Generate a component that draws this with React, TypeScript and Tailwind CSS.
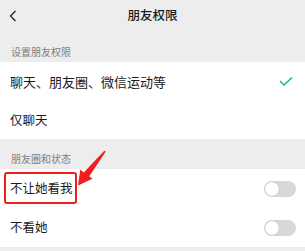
import React from 'react';

const Toggle: React.FC = () => (
    <div className="w-[32px] h-[16px] rounded-full bg-[#d8d8d8] flex items-center pl-[1px]">
        <div className="w-[14px] h-[14px] rounded-full bg-white shadow-[0_0_1px_rgba(0,0,0,0.35)]"></div>
    </div>
);

const App: React.FC = () => {
    return (
        <div
            className="relative w-[305px] h-[251px] bg-[#ededed] overflow-hidden text-[#1a1a1a]"
            style={{ fontFamily: '"Noto Sans CJK SC", "Noto Sans", sans-serif' }}
        >
            {/* header */}
            <div className="relative h-[30px] flex items-center justify-center">
                <svg className="absolute left-[9px] top-[10px]" width="8" height="12" viewBox="0 0 8 12">
                    <polyline points="6.5,1 1.5,6 6.5,11" fill="none" stroke="#1a1a1a" strokeWidth="1.2" />
                </svg>
                <span className="text-[12.5px] font-medium leading-none">朋友权限</span>
            </div>

            <div className="h-[32px] flex items-end pb-[4px] px-[11px]">
                <span className="text-[10px] leading-[12px] text-[#808080]">设置朋友权限</span>
            </div>

            <div className="bg-white">
                <div className="h-[39px] flex items-center justify-between px-[10px]">
                    <span className="text-[13px]">聊天、朋友圈、微信运动等</span>
                    <svg width="16" height="12" viewBox="0 0 16 12" className="mr-[1px]">
                        <polyline points="2,5 6,9 14,1.5" fill="none" stroke="#07c160" strokeWidth="1.4" />
                    </svg>
                </div>
                <div className="h-[38px] flex items-center px-[10px]">
                    <span className="text-[12.5px]">仅聊天</span>
                </div>
            </div>

            <div className="h-[30px] flex items-end pb-[4px] px-[11px]">
                <span className="text-[10px] leading-[12px] text-[#808080]">朋友圈和状态</span>
            </div>

            <div className="bg-white">
                <div className="relative h-[39px] flex items-center justify-between pl-[10px] pr-[9px]">
                    <span className="text-[12.5px]">不让她看我</span>
                    <Toggle />
                    <div className="absolute left-[4px] top-[3px] w-[73px] h-[32px] border-2 border-[#f01e1e] rounded-[3px]"></div>
                </div>
                <div className="h-[39px] flex items-center justify-between pl-[10px] pr-[9px]">
                    <span className="text-[12.5px]">不看她</span>
                    <Toggle />
                </div>
            </div>

            {/* annotation arrow */}
            <svg className="absolute left-0 top-0" width="305" height="251" viewBox="0 0 305 251">
                <polygon
                    points="105.8,151.6 89.3,176.2 92.5,178.8 78,185.5 80.3,169.6 83.8,172.4 104.3,150.8"
                    fill="#f01e1e"
                />
            </svg>
        </div>
    );
};

export default App;
